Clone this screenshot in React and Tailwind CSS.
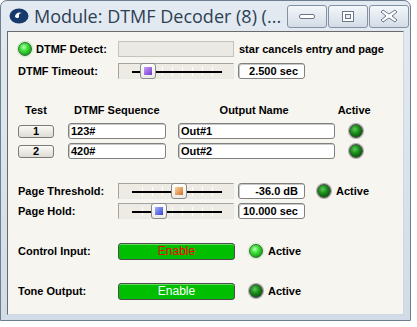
import React from "react"

const font = { fontFamily: '"Liberation Sans", Arial, sans-serif' }

function Led({ kind = "dark" }) {
  const cls =
    kind === "bright"
      ? "bg-[radial-gradient(circle_at_40%_35%,#b8ffb0_0%,#3fe03a_35%,#119a11_80%)] border-[#3a6a3a] shadow-[0_0_0_1.5px_#d4f0d0]"
      : "bg-[radial-gradient(circle_at_40%_35%,#5fc85a_0%,#198c19_40%,#0b4a0b_85%)] border-[#4a4a4a] shadow-[0_0_0_1px_#a9a9a9]"
  return <div className={`w-[14px] h-[14px] shrink-0 rounded-full border ${cls}`} />
}

function Slider({ pos, thumb }) {
  const ticks = [142, 152, 162, 172, 182, 192, 202, 212]
  return (
    <div className="relative w-[116px] h-[16px] shrink-0 border border-[#a3a3a0] border-r-[#e8e8e4] border-b-[#e8e8e4] bg-[#edebe4]">
      {ticks.map(t => (
        <div key={t} className="absolute top-[3px] h-[9px] w-px bg-white" style={{ left: t - 119 }} />
      ))}
      <div className="absolute left-[13px] right-[11px] top-[7px] h-[2px] bg-black" />
      <div
        className="absolute top-[-1px] w-[16px] h-[16px] rounded-[3px] border border-[#8a8a8a] bg-gradient-to-b from-white to-[#ecebe6] flex items-center justify-center"
        style={{ left: pos - 119 }}
      >
        <div className={`w-[8px] h-[8px] ${thumb}`} />
      </div>
    </div>
  )
}

function ValueBox({ children }) {
  return (
    <div className="w-[67px] h-[16px] shrink-0 rounded-[3px] border border-[#808080] bg-white shadow-[inset_1px_1px_0_#c8c8c8] flex items-center justify-end pr-[6px] text-[11px] font-bold text-black leading-none">
      {children}
    </div>
  )
}

function TextInput({ w, children }) {
  return (
    <div
      className="h-[16px] shrink-0 rounded-[3px] border border-[#808080] bg-white shadow-[inset_1px_1px_0_#c8c8c8] flex items-center pl-[2px] text-[11px] font-bold text-black leading-none"
      style={{ width: w }}
    >
      {children}
    </div>
  )
}

function TestBtn({ children }) {
  return (
    <div className="w-[36px] h-[13px] shrink-0 rounded-[3px] border border-[#7a7a7a] bg-gradient-to-b from-[#fbfaf6] to-[#dedcd3] flex items-center justify-center text-[11px] font-bold text-black leading-none">
      {children}
    </div>
  )
}

function GreenBtn({ color }) {
  return (
    <div className={`w-[117px] h-[17px] shrink-0 rounded-[3px] border border-[#4d4d4d] bg-[#00bf00] shadow-[inset_0_1px_0_#5ee05e] flex items-center justify-center text-[12px] font-medium leading-none ${color}`}>
      Enable
    </div>
  )
}

function WinBtn({ children }) {
  return (
    <div className="w-[40px] h-[23px] rounded-[3px] border border-[#8391a2] bg-gradient-to-b from-[#f4f7fa] to-[#d3dce6] flex items-center justify-center">
      {children}
    </div>
  )
}

export default function App() {
  const label = "w-[100px] shrink-0 text-[11px] font-bold text-black leading-none"
  return (
    <div className="w-[417px] h-[327px] bg-white" style={font}>
      <div className="w-[411px] h-[321px] rounded-t-[7px] border border-[#6f7d8d] bg-gradient-to-b from-[#e3eaf1] to-[#d2dce6] flex flex-col">
        {/* title bar */}
        <div className="h-[30px] flex items-center pl-[8px] pr-[1px] shrink-0">
          <svg width="20" height="16" viewBox="0 0 20 16" className="shrink-0">
            <ellipse cx="10" cy="8" rx="9.5" ry="7.5" fill="#153a6b" />
            <path d="M6 9 C6 5 10 3.5 13 5 C11 5 9.5 6 10 8 C10.5 10 8 11 6 9 Z" fill="#ffffff" />
          </svg>
          <div className="ml-[5px] text-[18px] text-[#2d3f55] leading-none whitespace-nowrap" style={{ fontFamily: '"Open Sans", "Noto Sans", sans-serif' }}>
            Module: DTMF Decoder (8) (...
          </div>
          <div className="ml-auto flex gap-[1px]">
            <WinBtn>
              <div className="w-[16px] h-[5px] rounded-[2px] border border-[#6b7788] bg-white" />
            </WinBtn>
            <WinBtn>
              <div className="w-[12px] h-[11px] border border-[#6b7788] bg-white flex items-center justify-center">
                <div className="w-[6px] h-[5px] border border-[#6b7788] bg-[#e8eef4]" />
              </div>
            </WinBtn>
            <WinBtn>
              <svg width="18" height="14" viewBox="0 0 18 14">
                <path d="M3 1 L9 5 L15 1 L17 3 L12 7 L17 11 L15 13 L9 9 L3 13 L1 11 L6 7 L1 3 Z" fill="#ffffff" stroke="#6b7788" strokeWidth="1" strokeLinejoin="round" />
              </svg>
            </WinBtn>
          </div>
        </div>

        {/* client area */}
        <div className="mx-[6px] h-[284px] border border-[#6a6a6a] border-r-[#cfd8e2] border-b-[#cfd8e2] bg-[#f6f5f0] pl-[10px] flex flex-col">
          <div className="mt-[9px] h-[16px] flex items-center">
            <div className="w-[100px] shrink-0 flex items-center gap-[4px]">
              <Led kind="bright" />
              <span className="text-[11px] font-bold text-black leading-none">DTMF Detect:</span>
            </div>
            <div className="w-[116px] h-[16px] shrink-0 border border-[#c4c3bc] bg-[#ebe9e3]" />
            <span className="ml-[5px] text-[11px] font-bold text-black leading-none">star cancels entry and page</span>
          </div>

          <div className="mt-[6px] h-[16px] flex items-center">
            <span className={label}>DTMF Timeout:</span>
            <Slider pos={140} thumb="bg-gradient-to-br from-[#c9a0ff] to-[#7436c8]" />
            <div className="ml-[4px]"><ValueBox>2.500 sec</ValueBox></div>
          </div>

          <div className="mt-[24px] h-[14px] flex items-center text-[11px] font-bold text-black leading-none">
            <span className="w-[36px] text-center shrink-0">Test</span>
            <span className="ml-[20px]">DTMF Sequence</span>
            <span className="ml-[60px]">Output Name</span>
            <span className="ml-[49px]">Active</span>
          </div>

          {[["1", "123#", "Out#1"], ["2", "420#", "Out#2"]].map(([n, seq, out], i) => (
            <div key={n} className={`${i === 0 ? "mt-[6px]" : "mt-[4px]"} h-[16px] flex items-center`}>
              <TestBtn>{n}</TestBtn>
              <div className="ml-[14px]"><TextInput w={98}>{seq}</TextInput></div>
              <div className="ml-[12px]"><TextInput w={157}>{out}</TextInput></div>
              <div className="ml-[14px]"><Led /></div>
            </div>
          ))}

          <div className="mt-[24px] h-[16px] flex items-center">
            <span className={label}>Page Threshold:</span>
            <Slider pos={171} thumb="bg-gradient-to-br from-[#ffd29a] to-[#c8732a]" />
            <div className="ml-[4px]"><ValueBox>-36.0 dB</ValueBox></div>
            <div className="ml-[12px]"><Led /></div>
            <span className="ml-[5px] text-[11px] font-bold text-black leading-none">Active</span>
          </div>

          <div className="mt-[4px] h-[16px] flex items-center">
            <span className={label}>Page Hold:</span>
            <Slider pos={151} thumb="bg-gradient-to-br from-[#a8b0ff] to-[#3a3ec8]" />
            <div className="ml-[4px]"><ValueBox>10.000 sec</ValueBox></div>
          </div>

          <div className="mt-[24px] h-[16px] flex items-center">
            <span className={label}>Control Input:</span>
            <GreenBtn color="text-[#ff0000]" />
            <div className="ml-[14px]"><Led kind="bright" /></div>
            <span className="ml-[5px] text-[11px] font-bold text-black leading-none">Active</span>
          </div>

          <div className="mt-[24px] h-[16px] flex items-center">
            <span className={label}>Tone Output:</span>
            <GreenBtn color="text-white" />
            <div className="ml-[14px]"><Led /></div>
            <span className="ml-[5px] text-[11px] font-bold text-black leading-none">Active</span>
          </div>
        </div>
      </div>
    </div>
  )
}
